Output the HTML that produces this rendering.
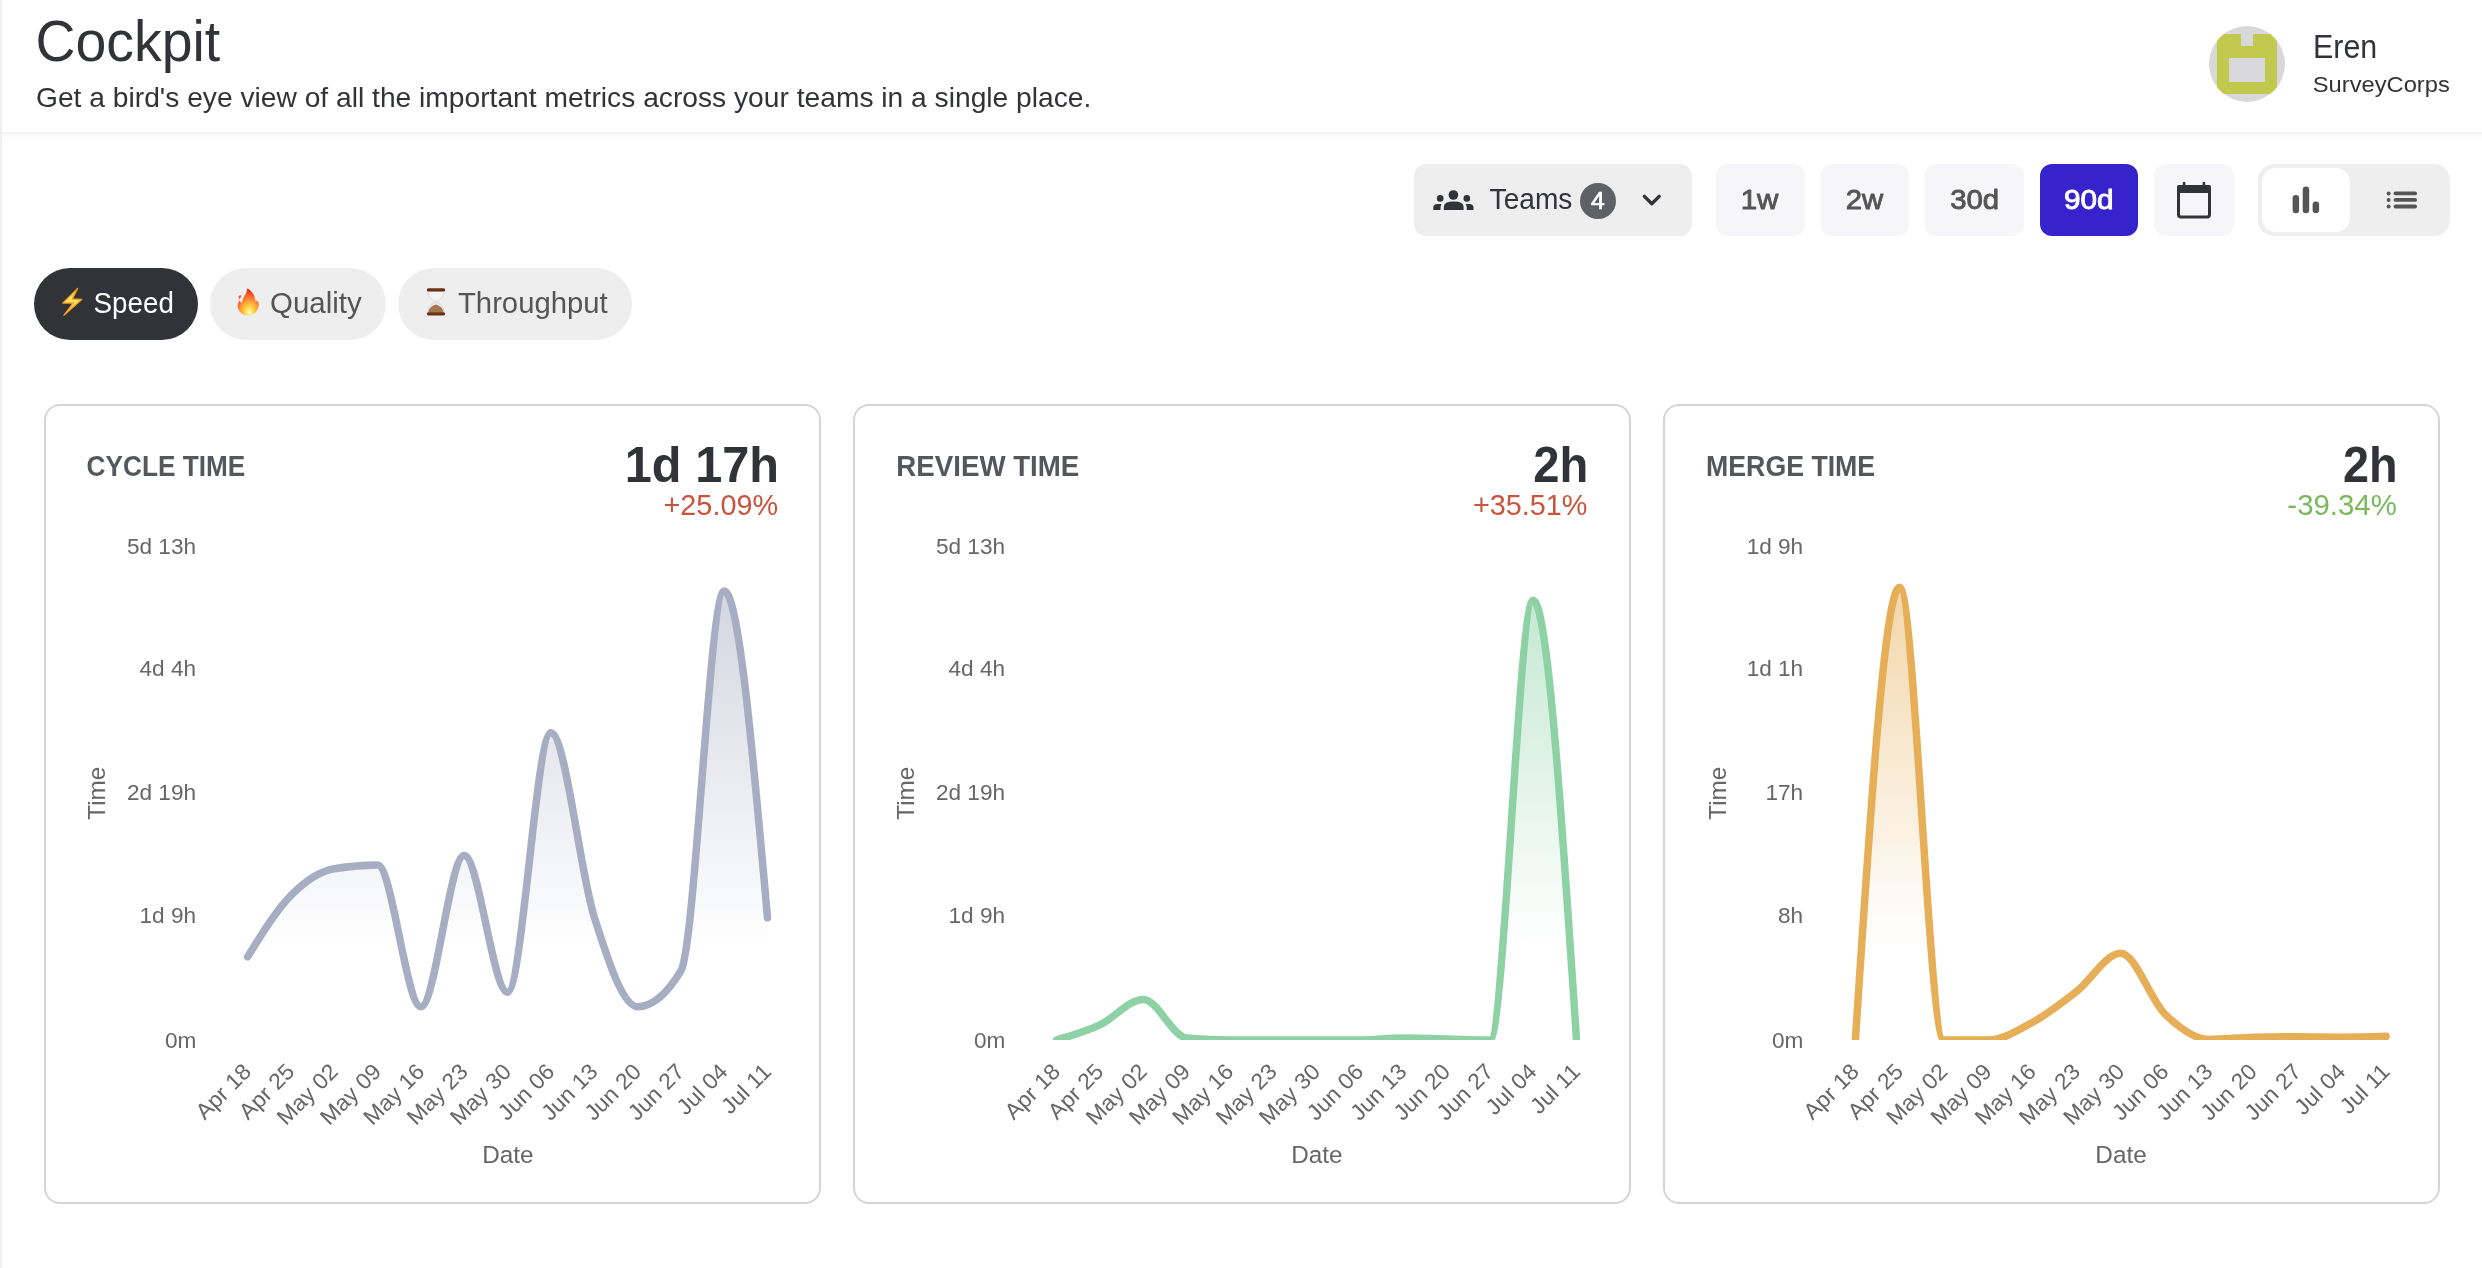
<!DOCTYPE html>
<html><head><meta charset="utf-8"><title>Cockpit</title>
<style>html,body{margin:0;padding:0;background:#fff;overflow:hidden}svg{display:block;will-change:transform}text{font-family:"Liberation Sans", sans-serif}</style>
</head><body>
<svg width="2482" height="1268" viewBox="0 0 2482 1268">
<defs>
<linearGradient id="hsh" x1="0" y1="0" x2="0" y2="1"><stop offset="0" stop-color="#000" stop-opacity="0.05"/><stop offset="1" stop-color="#000" stop-opacity="0"/></linearGradient>
<linearGradient id="g0" x1="0" y1="0" x2="0" y2="1"><stop offset="0" stop-color="#a7adc2" stop-opacity="0.5"/><stop offset="0.8" stop-color="#a7adc2" stop-opacity="0"/></linearGradient>
<clipPath id="cl0"><rect x="237.6" y="400" width="539.9" height="640"/></clipPath>
<linearGradient id="g1" x1="0" y1="0" x2="0" y2="1"><stop offset="0" stop-color="#8dd1a5" stop-opacity="0.5"/><stop offset="0.8" stop-color="#8dd1a5" stop-opacity="0"/></linearGradient>
<clipPath id="cl1"><rect x="1046.6" y="400" width="539.9000000000001" height="640"/></clipPath>
<linearGradient id="g2" x1="0" y1="0" x2="0" y2="1"><stop offset="0" stop-color="#e6ae56" stop-opacity="0.5"/><stop offset="0.8" stop-color="#e6ae56" stop-opacity="0"/></linearGradient>
<clipPath id="cl2"><rect x="1845.4" y="400" width="550.6999999999998" height="640"/></clipPath>
<clipPath id="avc"><circle cx="2247" cy="64" r="38"/></clipPath>
<linearGradient id="bolt" x1="0" y1="0" x2="0" y2="1"><stop offset="0" stop-color="#ffd23a"/><stop offset="1" stop-color="#f5a300"/></linearGradient>
<radialGradient id="fire" cx="0.55" cy="0.88" r="0.8"><stop offset="0" stop-color="#fffde8"/><stop offset="0.2" stop-color="#ffe14a"/><stop offset="0.5" stop-color="#ffa23a"/><stop offset="0.8" stop-color="#f75a2a"/><stop offset="1" stop-color="#ee2f16"/></radialGradient>
</defs>
<rect x="0" y="0" width="2482" height="1268" fill="#ffffff"/>
<rect x="2" y="132" width="2480" height="6" fill="url(#hsh)"/>
<rect x="0" y="0" width="2" height="1268" fill="#eeeff1"/>
<circle cx="2247" cy="64" r="38" fill="#d8d8da"/>
<g clip-path="url(#avc)"><path d="M2217,34h60v60h-60z M2229,58v24h36v-24z M2241,34v12h12v-12z" fill="#c3c94f" fill-rule="evenodd"/></g>
<rect x="1414" y="164" width="278" height="72" rx="12" fill="#eeeeee"/>
<g fill="#323338">
<circle cx="1453.4" cy="195" r="4.8"/>
<path d="M1443.8,210 L1443.8,207 Q1443.8,201.6 1453.7,201.6 Q1463.6,201.6 1463.6,207 L1463.6,210 Z"/>
<circle cx="1440.2" cy="198.4" r="3.3"/><circle cx="1466.8" cy="198.4" r="3.3"/>
<path d="M1433.3,210 L1433.3,207.5 Q1433.3,203.9 1437.5,203.9 L1441.3,203.9 Q1440.5,206 1440.5,210 Z"/>
<path d="M1473.5,210 L1473.5,207.5 Q1473.5,203.9 1469.3,203.9 L1465.8,203.9 Q1466.8,206 1466.8,210 Z"/>
</g>
<circle cx="1598" cy="201" r="18" fill="#5f6167"/>
<polyline points="1644.4,196.4 1651.8,203.8 1659.2,196.4" fill="none" stroke="#323338" stroke-width="3.4" stroke-linecap="round" stroke-linejoin="round"/>
<rect x="1716" y="164" width="89" height="72" rx="12" fill="#f6f6f8"/>
<rect x="1821" y="164" width="88" height="72" rx="12" fill="#f6f6f8"/>
<rect x="1925" y="164" width="99" height="72" rx="12" fill="#f6f6f8"/>
<rect x="2154" y="164" width="80" height="72" rx="12" fill="#f6f6f8"/>
<rect x="2040" y="164" width="98" height="72" rx="12" fill="#3623cc"/>
<rect x="2178.5" y="186.5" width="31" height="30.5" rx="2.5" fill="none" stroke="#323338" stroke-width="3"/>
<rect x="2177" y="185" width="34" height="8" rx="2" fill="#323338"/>
<rect x="2182.8" y="181.8" width="2.6" height="5" rx="1.2" fill="#323338"/><rect x="2202.6" y="181.8" width="2.6" height="5" rx="1.2" fill="#323338"/>
<rect x="2258" y="164" width="192" height="72" rx="16" fill="#eeeeee"/>
<rect x="2262" y="168" width="88" height="64" rx="14" fill="#ffffff"/>
<g fill="#555555">
<rect x="2292.6" y="195" width="6.5" height="18.2" rx="3.25"/><rect x="2302.7" y="186.6" width="6.5" height="26.6" rx="3.25"/><rect x="2312.6" y="201.5" width="6.5" height="11.7" rx="3.25"/>
<circle cx="2388.6" cy="193.4" r="2"/><rect x="2393.6" y="191.45000000000002" width="23.4" height="3.9" rx="1.95"/>
<circle cx="2388.6" cy="199.9" r="2"/><rect x="2393.6" y="197.95000000000002" width="23.4" height="3.9" rx="1.95"/>
<circle cx="2388.6" cy="206.5" r="2"/><rect x="2393.6" y="204.55" width="23.4" height="3.9" rx="1.95"/>
</g>
<rect x="34" y="268" width="164" height="72" rx="36" fill="#323338"/>
<rect x="210" y="268" width="176" height="72" rx="36" fill="#eeeeee"/>
<rect x="398" y="268" width="234" height="72" rx="36" fill="#eeeeee"/>
<path d="M77.6,288.4 L62.8,303.1 L73.3,302.9 L63.9,315.3 L81.7,299.4 L72.3,299.0 Z" fill="#ffe066" stroke="#f7a214" stroke-width="1.3" stroke-linejoin="round"/>
<path d="M247.5,288.3 C250.5,290.3 254.6,293.8 255,299 L255.6,301.3 L257.6,300.8 C259.2,303.2 259.4,307 257.2,310.2 C255.6,313 252.2,315.5 248.5,315.5 C244.6,315.5 241.2,313.6 239.6,311.4 C237.6,308.8 237.3,305.2 237.9,303.5 L239.5,300.3 L241.7,303.3 C242.3,300.3 243.3,297.2 245,295.2 C246.5,293.4 246.7,290.6 247.5,288.3 Z" fill="url(#fire)"/>
<ellipse cx="239.8" cy="297" rx="1" ry="2" transform="rotate(25 239.8 297)" fill="#f2532a"/>
<path d="M427.9,291.2 C427.6,296.5 431.5,299.3 434.6,301.2 L435.9,302 L437.2,301.2 C440.3,299.3 444.2,296.5 443.9,291.2 Z" fill="#f4f4f4" stroke="#bdbdbd" stroke-width="0.5"/>
<path d="M427.9,312.6 C427.6,307.3 431.5,304.5 434.6,302.6 L435.9,301.8 L437.2,302.6 C440.3,304.5 444.2,307.3 443.9,312.6 Z" fill="#ededed" stroke="#bdbdbd" stroke-width="0.5"/>
<path d="M428.4,312.4 C428.5,308.6 431.8,305.8 435.9,304.6 C440,305.8 443.3,308.6 443.4,312.4 Z" fill="#a77750"/>
<rect x="426.8" y="288.3" width="18.4" height="3.2" rx="1.6" fill="#6e3116"/><rect x="426.8" y="312.2" width="18.4" height="3.2" rx="1.6" fill="#6e3116"/>
<rect x="45" y="405" width="775" height="798" rx="15" fill="#ffffff" stroke="#d3d5db" stroke-width="2"/>
<rect x="854" y="405" width="776" height="798" rx="15" fill="#ffffff" stroke="#d3d5db" stroke-width="2"/>
<rect x="1664" y="405" width="775" height="798" rx="15" fill="#ffffff" stroke="#d3d5db" stroke-width="2"/>
<g clip-path="url(#cl0)"><path d="M247.60,956.90C262.04,933.50,276.48,910.10,290.93,895.40C305.37,880.70,319.81,871.17,334.25,868.70C348.69,866.23,363.13,865.00,377.57,865.00C392.02,865.00,406.46,1006.80,420.90,1006.80C435.34,1006.80,449.78,855.60,464.22,855.60C478.67,855.60,493.11,992.30,507.55,992.30C521.99,992.30,536.43,732.80,550.88,732.80C565.32,732.80,579.76,871.15,594.20,916.80C608.64,962.45,623.08,1006.70,637.52,1006.70C651.97,1006.70,666.41,994.80,680.85,971.00C695.29,947.20,709.73,590.90,724.17,590.90C738.62,590.90,753.06,754.35,767.50,917.80L767.50,1040L247.60,1040Z" fill="url(#g0)"/><path d="M247.60,956.90C262.04,933.50,276.48,910.10,290.93,895.40C305.37,880.70,319.81,871.17,334.25,868.70C348.69,866.23,363.13,865.00,377.57,865.00C392.02,865.00,406.46,1006.80,420.90,1006.80C435.34,1006.80,449.78,855.60,464.22,855.60C478.67,855.60,493.11,992.30,507.55,992.30C521.99,992.30,536.43,732.80,550.88,732.80C565.32,732.80,579.76,871.15,594.20,916.80C608.64,962.45,623.08,1006.70,637.52,1006.70C651.97,1006.70,666.41,994.80,680.85,971.00C695.29,947.20,709.73,590.90,724.17,590.90C738.62,590.90,753.06,754.35,767.50,917.80" fill="none" stroke="#a7adc2" stroke-width="7.5" stroke-linecap="round" stroke-linejoin="round"/></g>
<g clip-path="url(#cl1)"><path d="M1056.60,1040.00C1071.04,1035.83,1085.48,1031.67,1099.92,1024.90C1114.37,1018.13,1128.81,999.40,1143.25,999.40C1157.69,999.40,1172.13,1036.67,1186.57,1038.00C1201.02,1039.33,1215.46,1040.00,1229.90,1040.00C1244.34,1040.00,1258.78,1040.00,1273.22,1040.00C1287.67,1040.00,1302.11,1040.00,1316.55,1040.00C1330.99,1040.00,1345.43,1040.00,1359.88,1040.00C1374.32,1040.00,1388.76,1038.00,1403.20,1038.00C1417.64,1038.00,1432.08,1038.67,1446.53,1039.00C1460.97,1039.33,1475.41,1040.00,1489.85,1040.00C1504.29,1040.00,1518.73,600.30,1533.17,600.30C1547.62,600.30,1562.06,820.15,1576.50,1040.00L1576.50,1040L1056.60,1040Z" fill="url(#g1)"/><path d="M1056.60,1040.00C1071.04,1035.83,1085.48,1031.67,1099.92,1024.90C1114.37,1018.13,1128.81,999.40,1143.25,999.40C1157.69,999.40,1172.13,1036.67,1186.57,1038.00C1201.02,1039.33,1215.46,1040.00,1229.90,1040.00C1244.34,1040.00,1258.78,1040.00,1273.22,1040.00C1287.67,1040.00,1302.11,1040.00,1316.55,1040.00C1330.99,1040.00,1345.43,1040.00,1359.88,1040.00C1374.32,1040.00,1388.76,1038.00,1403.20,1038.00C1417.64,1038.00,1432.08,1038.67,1446.53,1039.00C1460.97,1039.33,1475.41,1040.00,1489.85,1040.00C1504.29,1040.00,1518.73,600.30,1533.17,600.30C1547.62,600.30,1562.06,820.15,1576.50,1040.00" fill="none" stroke="#8dd1a5" stroke-width="7.5" stroke-linecap="round" stroke-linejoin="round"/></g>
<g clip-path="url(#cl2)"><path d="M1855.40,1040.00C1870.14,813.65,1884.88,587.30,1899.62,587.30C1914.37,587.30,1929.11,1040.00,1943.85,1040.00C1958.59,1040.00,1973.33,1040.00,1988.08,1040.00C2002.82,1040.00,2017.56,1030.58,2032.30,1022.50C2047.04,1014.42,2061.78,1003.03,2076.53,991.50C2091.27,979.97,2106.01,953.30,2120.75,953.30C2135.49,953.30,2150.23,999.73,2164.97,1014.10C2179.72,1028.47,2194.46,1039.50,2209.20,1039.50C2223.94,1039.50,2238.68,1037.53,2253.43,1037.20C2268.17,1036.87,2282.91,1036.70,2297.65,1036.70C2312.39,1036.70,2327.13,1037.20,2341.88,1037.20C2356.62,1037.20,2371.36,1036.75,2386.10,1036.30L2386.10,1040L1855.40,1040Z" fill="url(#g2)"/><path d="M1855.40,1040.00C1870.14,813.65,1884.88,587.30,1899.62,587.30C1914.37,587.30,1929.11,1040.00,1943.85,1040.00C1958.59,1040.00,1973.33,1040.00,1988.08,1040.00C2002.82,1040.00,2017.56,1030.58,2032.30,1022.50C2047.04,1014.42,2061.78,1003.03,2076.53,991.50C2091.27,979.97,2106.01,953.30,2120.75,953.30C2135.49,953.30,2150.23,999.73,2164.97,1014.10C2179.72,1028.47,2194.46,1039.50,2209.20,1039.50C2223.94,1039.50,2238.68,1037.53,2253.43,1037.20C2268.17,1036.87,2282.91,1036.70,2297.65,1036.70C2312.39,1036.70,2327.13,1037.20,2341.88,1037.20C2356.62,1037.20,2371.36,1036.75,2386.10,1036.30" fill="none" stroke="#e6ae56" stroke-width="7.5" stroke-linecap="round" stroke-linejoin="round"/></g>
<text transform="translate(35.40,61.20) scale(0.9508,1)" font-size="58.29" font-weight="400" fill="#323338">Cockpit</text>
<text transform="translate(36.00,106.80) scale(0.9951,1)" font-size="28.34" font-weight="400" fill="#323338">Get a bird&#39;s eye view of all the important metrics across your teams in a single place.</text>
<text transform="translate(2313.07,58.20) scale(0.9133,1)" font-size="33.29" font-weight="400" fill="#323338">Eren</text>
<text transform="translate(2312.75,91.80) scale(1.0461,1)" font-size="22.67" font-weight="400" fill="#323338">SurveyCorps</text>
<text transform="translate(1489.60,209.30) scale(0.9392,1)" font-size="29.94" font-weight="400" fill="#323338">Teams</text>
<text transform="translate(1740.65,208.85) scale(1.0670,1)" font-size="27.76" font-weight="400" fill="#555555" stroke="#555555" stroke-width="0.9" stroke-linejoin="round">1w</text>
<text transform="translate(1845.72,208.85) scale(1.0541,1)" font-size="27.76" font-weight="400" fill="#555555" stroke="#555555" stroke-width="0.9" stroke-linejoin="round">2w</text>
<text transform="translate(1950.22,208.85) scale(1.0566,1)" font-size="27.76" font-weight="400" fill="#555555" stroke="#555555" stroke-width="0.9" stroke-linejoin="round">30d</text>
<text transform="translate(2063.91,208.85) scale(1.0722,1)" font-size="27.76" font-weight="400" fill="#ffffff" stroke="#ffffff" stroke-width="0.9" stroke-linejoin="round">90d</text>
<text transform="translate(93.56,313.20) scale(0.9372,1)" font-size="29.65" font-weight="400" fill="#ffffff">Speed</text>
<text transform="translate(270.01,313.20) scale(0.9931,1)" font-size="29.65" font-weight="400" fill="#555555">Quality</text>
<text transform="translate(458.00,313.20) scale(0.9871,1)" font-size="29.65" font-weight="400" fill="#555555">Throughput</text>
<text transform="translate(86.60,476.00) scale(0.9020,1)" font-size="29.07" font-weight="700" fill="#54575c">CYCLE TIME</text>
<text transform="translate(896.35,476.00) scale(0.9525,1)" font-size="29.07" font-weight="700" fill="#54575c">REVIEW TIME</text>
<text transform="translate(1706.08,476.00) scale(0.9185,1)" font-size="29.07" font-weight="700" fill="#54575c">MERGE TIME</text>
<text transform="translate(624.78,482.00) scale(0.9741,1)" font-size="50.0" font-weight="700" fill="#323338">1d 17h</text>
<text transform="translate(1533.26,482.00) scale(0.9433,1)" font-size="50.0" font-weight="700" fill="#323338">2h</text>
<text transform="translate(2343.06,482.00) scale(0.9360,1)" font-size="50.0" font-weight="700" fill="#323338">2h</text>
<text transform="translate(663.49,514.70) scale(1.0076,1)" font-size="28.63" font-weight="400" fill="#c8553d">+25.09%</text>
<text transform="translate(1472.89,514.70) scale(1.0067,1)" font-size="28.63" font-weight="400" fill="#c8553d">+35.51%</text>
<text transform="translate(2287.37,514.70) scale(1.0270,1)" font-size="28.63" font-weight="400" fill="#7ab85c">-39.34%</text>
<text x="1597.8" y="208.8" font-size="24.6" font-weight="400" fill="#ffffff" stroke="#ffffff" stroke-width="0.7" text-anchor="middle">4</text>
<text x="126.96" y="554.00" font-size="22.6" font-weight="400" fill="#666666">5d 13h</text>
<text x="139.53" y="676.00" font-size="22.6" font-weight="400" fill="#666666">4d 4h</text>
<text x="126.96" y="799.60" font-size="22.6" font-weight="400" fill="#666666">2d 19h</text>
<text x="139.53" y="923.40" font-size="22.6" font-weight="400" fill="#666666">1d 9h</text>
<text x="164.93" y="1047.70" font-size="22.6" font-weight="400" fill="#666666">0m</text>
<text transform="translate(104.90,819.80) rotate(-90)" font-size="24.3" fill="#666666">Time</text>
<text x="482.15" y="1162.8" font-size="24.3" fill="#666666">Date</text>
<text transform="translate(252.55,1073.05) rotate(-45) scale(1.025,1)" text-anchor="end" font-size="22.4" fill="#666666">Apr 18</text>
<text transform="translate(295.88,1073.05) rotate(-45) scale(1.025,1)" text-anchor="end" font-size="22.4" fill="#666666">Apr 25</text>
<text transform="translate(339.20,1073.05) rotate(-45) scale(1.025,1)" text-anchor="end" font-size="22.4" fill="#666666">May 02</text>
<text transform="translate(382.52,1073.05) rotate(-45) scale(1.025,1)" text-anchor="end" font-size="22.4" fill="#666666">May 09</text>
<text transform="translate(425.85,1073.05) rotate(-45) scale(1.025,1)" text-anchor="end" font-size="22.4" fill="#666666">May 16</text>
<text transform="translate(469.17,1073.05) rotate(-45) scale(1.025,1)" text-anchor="end" font-size="22.4" fill="#666666">May 23</text>
<text transform="translate(512.50,1073.05) rotate(-45) scale(1.025,1)" text-anchor="end" font-size="22.4" fill="#666666">May 30</text>
<text transform="translate(555.82,1073.05) rotate(-45) scale(1.025,1)" text-anchor="end" font-size="22.4" fill="#666666">Jun 06</text>
<text transform="translate(599.15,1073.05) rotate(-45) scale(1.025,1)" text-anchor="end" font-size="22.4" fill="#666666">Jun 13</text>
<text transform="translate(642.47,1073.05) rotate(-45) scale(1.025,1)" text-anchor="end" font-size="22.4" fill="#666666">Jun 20</text>
<text transform="translate(685.80,1073.05) rotate(-45) scale(1.025,1)" text-anchor="end" font-size="22.4" fill="#666666">Jun 27</text>
<text transform="translate(729.12,1073.05) rotate(-45) scale(1.025,1)" text-anchor="end" font-size="22.4" fill="#666666">Jul 04</text>
<text transform="translate(772.45,1073.05) rotate(-45) scale(1.025,1)" text-anchor="end" font-size="22.4" fill="#666666">Jul 11</text>
<text x="935.96" y="554.00" font-size="22.6" font-weight="400" fill="#666666">5d 13h</text>
<text x="948.53" y="676.00" font-size="22.6" font-weight="400" fill="#666666">4d 4h</text>
<text x="935.96" y="799.60" font-size="22.6" font-weight="400" fill="#666666">2d 19h</text>
<text x="948.53" y="923.40" font-size="22.6" font-weight="400" fill="#666666">1d 9h</text>
<text x="973.93" y="1047.70" font-size="22.6" font-weight="400" fill="#666666">0m</text>
<text transform="translate(913.90,819.80) rotate(-90)" font-size="24.3" fill="#666666">Time</text>
<text x="1291.15" y="1162.8" font-size="24.3" fill="#666666">Date</text>
<text transform="translate(1061.55,1073.05) rotate(-45) scale(1.025,1)" text-anchor="end" font-size="22.4" fill="#666666">Apr 18</text>
<text transform="translate(1104.88,1073.05) rotate(-45) scale(1.025,1)" text-anchor="end" font-size="22.4" fill="#666666">Apr 25</text>
<text transform="translate(1148.20,1073.05) rotate(-45) scale(1.025,1)" text-anchor="end" font-size="22.4" fill="#666666">May 02</text>
<text transform="translate(1191.52,1073.05) rotate(-45) scale(1.025,1)" text-anchor="end" font-size="22.4" fill="#666666">May 09</text>
<text transform="translate(1234.85,1073.05) rotate(-45) scale(1.025,1)" text-anchor="end" font-size="22.4" fill="#666666">May 16</text>
<text transform="translate(1278.17,1073.05) rotate(-45) scale(1.025,1)" text-anchor="end" font-size="22.4" fill="#666666">May 23</text>
<text transform="translate(1321.50,1073.05) rotate(-45) scale(1.025,1)" text-anchor="end" font-size="22.4" fill="#666666">May 30</text>
<text transform="translate(1364.83,1073.05) rotate(-45) scale(1.025,1)" text-anchor="end" font-size="22.4" fill="#666666">Jun 06</text>
<text transform="translate(1408.15,1073.05) rotate(-45) scale(1.025,1)" text-anchor="end" font-size="22.4" fill="#666666">Jun 13</text>
<text transform="translate(1451.48,1073.05) rotate(-45) scale(1.025,1)" text-anchor="end" font-size="22.4" fill="#666666">Jun 20</text>
<text transform="translate(1494.80,1073.05) rotate(-45) scale(1.025,1)" text-anchor="end" font-size="22.4" fill="#666666">Jun 27</text>
<text transform="translate(1538.12,1073.05) rotate(-45) scale(1.025,1)" text-anchor="end" font-size="22.4" fill="#666666">Jul 04</text>
<text transform="translate(1581.45,1073.05) rotate(-45) scale(1.025,1)" text-anchor="end" font-size="22.4" fill="#666666">Jul 11</text>
<text x="1746.63" y="554.00" font-size="22.6" font-weight="400" fill="#666666">1d 9h</text>
<text x="1746.63" y="676.00" font-size="22.6" font-weight="400" fill="#666666">1d 1h</text>
<text x="1765.47" y="799.60" font-size="22.6" font-weight="400" fill="#666666">17h</text>
<text x="1778.03" y="923.40" font-size="22.6" font-weight="400" fill="#666666">8h</text>
<text x="1772.03" y="1047.70" font-size="22.6" font-weight="400" fill="#666666">0m</text>
<text transform="translate(1726.40,819.80) rotate(-90)" font-size="24.3" fill="#666666">Time</text>
<text x="2095.35" y="1162.8" font-size="24.3" fill="#666666">Date</text>
<text transform="translate(1860.35,1073.05) rotate(-45) scale(1.025,1)" text-anchor="end" font-size="22.4" fill="#666666">Apr 18</text>
<text transform="translate(1904.58,1073.05) rotate(-45) scale(1.025,1)" text-anchor="end" font-size="22.4" fill="#666666">Apr 25</text>
<text transform="translate(1948.80,1073.05) rotate(-45) scale(1.025,1)" text-anchor="end" font-size="22.4" fill="#666666">May 02</text>
<text transform="translate(1993.03,1073.05) rotate(-45) scale(1.025,1)" text-anchor="end" font-size="22.4" fill="#666666">May 09</text>
<text transform="translate(2037.25,1073.05) rotate(-45) scale(1.025,1)" text-anchor="end" font-size="22.4" fill="#666666">May 16</text>
<text transform="translate(2081.48,1073.05) rotate(-45) scale(1.025,1)" text-anchor="end" font-size="22.4" fill="#666666">May 23</text>
<text transform="translate(2125.70,1073.05) rotate(-45) scale(1.025,1)" text-anchor="end" font-size="22.4" fill="#666666">May 30</text>
<text transform="translate(2169.93,1073.05) rotate(-45) scale(1.025,1)" text-anchor="end" font-size="22.4" fill="#666666">Jun 06</text>
<text transform="translate(2214.15,1073.05) rotate(-45) scale(1.025,1)" text-anchor="end" font-size="22.4" fill="#666666">Jun 13</text>
<text transform="translate(2258.38,1073.05) rotate(-45) scale(1.025,1)" text-anchor="end" font-size="22.4" fill="#666666">Jun 20</text>
<text transform="translate(2302.60,1073.05) rotate(-45) scale(1.025,1)" text-anchor="end" font-size="22.4" fill="#666666">Jun 27</text>
<text transform="translate(2346.83,1073.05) rotate(-45) scale(1.025,1)" text-anchor="end" font-size="22.4" fill="#666666">Jul 04</text>
<text transform="translate(2391.05,1073.05) rotate(-45) scale(1.025,1)" text-anchor="end" font-size="22.4" fill="#666666">Jul 11</text>
</svg>
</body></html>
